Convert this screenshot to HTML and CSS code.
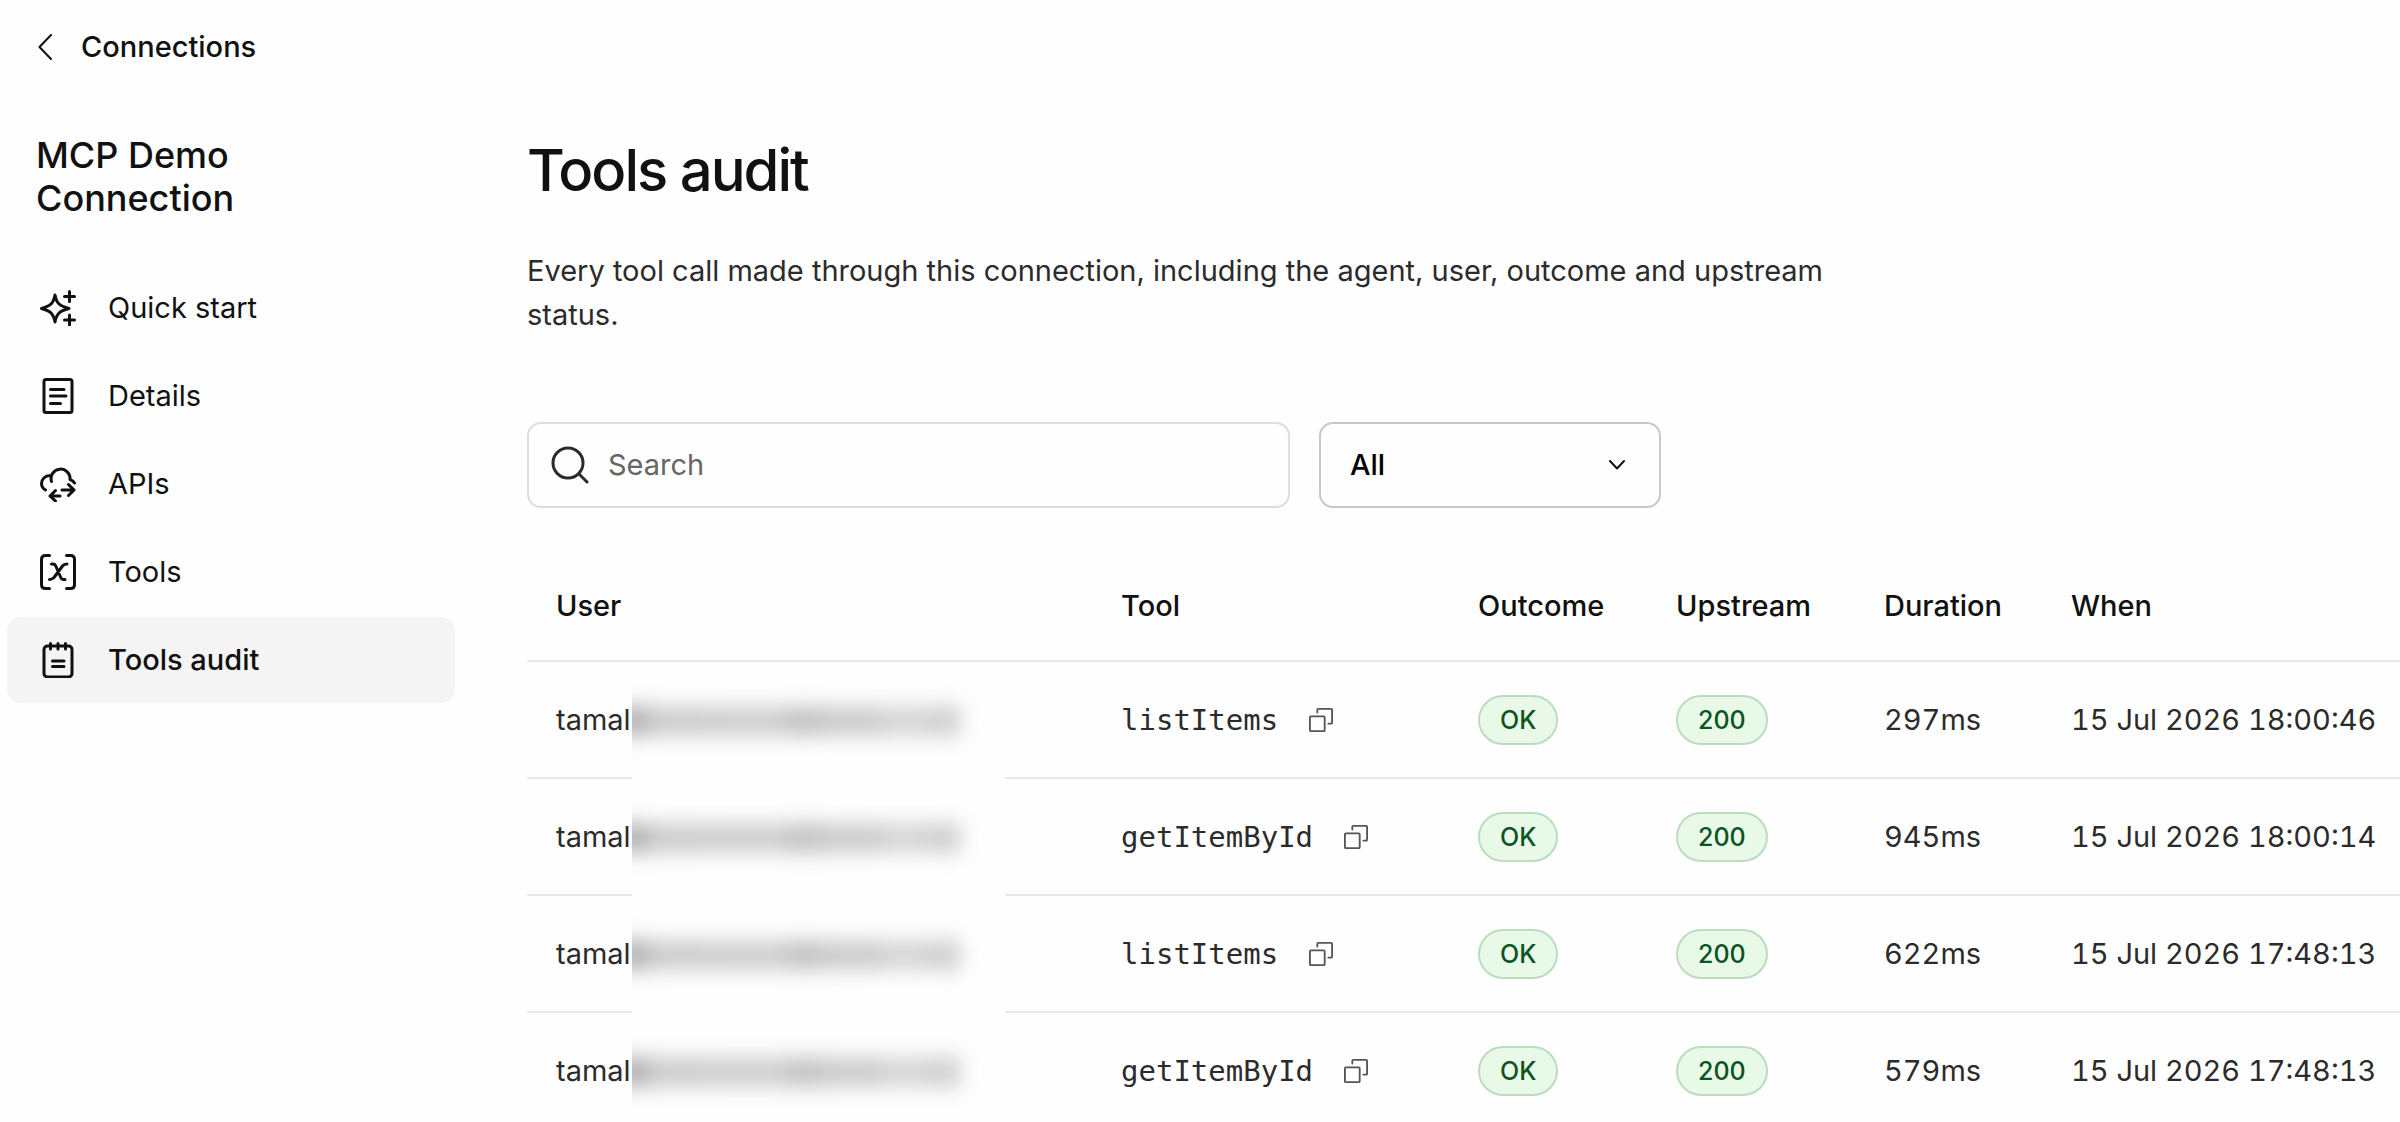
FILE: index.html
```html
<!DOCTYPE html>
<html lang="en">
<head>
    <meta charset="UTF-8">
    <title>Tools audit</title>
    <link rel="stylesheet" href="styles.css">
</head>
<body>
    <header class="topbar">
        <a href="#" class="back-link">
            <svg class="back-icon" viewBox="0 0 14 26"><path d="M13 1 L1.500 13 L13 25"/></svg>
            Connections
        </a>
    </header>

    <div class="layout">
        <nav class="sidebar">
            <h2>MCP Demo Connection</h2>
            <a href="#" class="nav-item">
                <svg class="nav-icon" viewBox="0 0 36 36"><path d="M15 5 C16.500 13 19 16 29 18.500 C19 21 16.500 24 15 32 C13.500 24 11 21 1.500 18.500 C11 16 13.500 13 15 5z"/><path d="M29.500 1.500v10M24.500 6.500h10M29.500 25v10M24.500 30h10"/></svg>
                Quick start
            </a>
            <a href="#" class="nav-item">
                <svg class="nav-icon" viewBox="0 0 36 36"><rect x="4" y="1.500" width="28" height="33" rx="2"/><path d="M10.500 11.500h13.500M10.500 18h15.500M10.500 25.500h10"/></svg>
                Details
            </a>
            <a href="#" class="nav-item">
                <svg class="nav-icon" viewBox="0 0 36 36"><path d="M11.500 15.500a9.500 9.500 0 1 1 18.500 -2q3 1 4.500 3.500M10 9.500c-5 0-8.500 4-8.500 8q0 4 4 6.500"/><path d="M22 24h12M28.500 18.500l5.500 5.500-5.500 5.500M20 30h-10M15.500 24.500l-5.500 5.500 5.500 5"/></svg>
                APIs
            </a>
            <a href="#" class="nav-item">
                <svg class="nav-icon" viewBox="0 0 36 36"><path d="M9.500 1.500h-4q-4 0-4 4v25q0 4 4 4h4M26.500 1.500h4q4 0 4 4v25q0 4-4 4h-4"/><path d="M11.500 10h1.500q2 0 3 2.500l4.500 10.500q1 2.500 3 2.500h1.500M27 10q-3 0-4.500 2l-8.500 11.500q-2 2-4.500 2"/></svg>
                Tools
            </a>
            <a href="#" class="nav-item active">
                <svg class="nav-icon" viewBox="0 0 36 36"><rect x="4" y="4" width="28" height="31" rx="3.500"/><path d="M10.500 1.500v5.500M18 1.500v5.500M25.500 1.500v5.500M12.500 19h11.500M12.500 24.500h11.500"/></svg>
                Tools audit
            </a>
        </nav>

        <main class="content">
            <h1>Tools audit</h1>
            <p class="intro">Every tool call made through this connection, including the agent, user, outcome and upstream status.</p>

            <div class="filters">
                <label class="search">
                    <svg class="search-icon" viewBox="0 0 38 38"><circle cx="17" cy="17" r="15"/><path d="M28 28l8 8"/></svg>
                    <input type="text" placeholder="Search" aria-label="Search">
                </label>
                <div class="select-box">
                    <select aria-label="Outcome">
                        <option>All</option>
                        <option>OK</option>
                        <option>Error</option>
                    </select>
                    <svg class="chevron" viewBox="0 0 16 10"><path d="M1 1l7 7.500 7-7.500"/></svg>
                </div>
            </div>

            <table class="audit">
                <thead>
                    <tr>
                        <th class="col-user">User</th>
                        <th class="col-tool">Tool</th>
                        <th class="col-outcome">Outcome</th>
                        <th class="col-upstream">Upstream</th>
                        <th class="col-duration">Duration</th>
                        <th>When</th>
                    </tr>
                </thead>
                <tbody id="auditRows">
                    <!-- Audit rows are inserted here -->
                </tbody>
            </table>
        </main>
    </div>

    <script>
        const calls = [
            { tool: 'listItems', duration: '297ms', when: '15 Jul 2026 18:00:46' },
            { tool: 'getItemById', duration: '945ms', when: '15 Jul 2026 18:00:14' },
            { tool: 'listItems', duration: '622ms', when: '15 Jul 2026 17:48:13' },
            { tool: 'getItemById', duration: '579ms', when: '15 Jul 2026 17:48:13' }
        ];

        const rows = document.getElementById('auditRows');

        calls.forEach((call) => {
            const row = document.createElement('tr');
            row.innerHTML = `
                <td class="user">tamal<span class="redacted"><span class="smudge"></span></span></td>
                <td><div class="tool"><code>${call.tool}</code>
                    <button class="copy" aria-label="Copy"><svg viewBox="0 0 26 26"><rect x="1" y="9" width="16" height="16" rx="1"/><path d="M9 5V2q0-1 1-1h14q1 0 1 1v14q0 1-1 1h-3"/></svg></button></div></td>
                <td><span class="badge">OK</span></td>
                <td><span class="badge">200</span></td>
                <td class="num">${call.duration}</td>
                <td class="num">${call.when}</td>`;
            rows.appendChild(row);
        });
    </script>
</body>
</html>
```
FILE: styles.css
```css
/* General Styles */
* {
    box-sizing: border-box;
}
body {
    font-family: Inter, "Liberation Sans", sans-serif;
    font-size: 29px;
    line-height: 44px;
    background-color: #fefefe;
    margin: 0;
    color: #111;
    overflow-x: hidden;
}
a {
    color: inherit;
    text-decoration: none;
}
svg {
    fill: none;
    stroke: currentColor;
    stroke-linecap: round;
    stroke-linejoin: round;
}
/* Top bar */
.topbar {
    display: flex;
    align-items: center;
    height: 94px;
    padding-left: 38px;
}
.back-link {
    display: flex;
    align-items: center;
    gap: 29px;
    font-weight: 500;
}
.back-icon {
    width: 14px;
    height: 26px;
    stroke-width: 2;
}
/* Layout */
.layout {
    display: flex;
    align-items: flex-start;
}
.sidebar {
    flex: none;
    width: 455px;
    padding: 40px 0 0 7px;
}
.sidebar h2 {
    width: 240px;
    margin: 0 0 45px 29px;
    font-size: 36px;
    font-weight: 500;
    line-height: 43px;
}
.nav-item {
    display: flex;
    align-items: center;
    gap: 32px;
    height: 86px;
    margin-bottom: 2px;
    padding-left: 33px;
    border-radius: 14px;
}
.nav-item.active {
    background-color: #f4f4f4;
    font-weight: 500;
}
.nav-icon {
    width: 36px;
    height: 36px;
    stroke-width: 3;
}
/* Content */
.content {
    flex: 1;
    min-width: 0;
    padding: 40px 0 0 72px;
}
h1 {
    margin: 0;
    font-size: 58px;
    font-weight: 500;
    line-height: 72px;
    letter-spacing: -2px;
}
.intro {
    max-width: 1300px;
    margin: 43px 0 85px;
    color: #2b2b2b;
}
/* Filters */
.filters {
    display: flex;
    gap: 29px;
}
.search {
    display: flex;
    align-items: center;
    width: 763px;
    height: 86px;
    padding-left: 22px;
    border: 2px solid #ddd;
    border-radius: 14px;
    gap: 19px;
}
.search-icon {
    flex: none;
    width: 38px;
    height: 38px;
    stroke: #2b2b2b;
    stroke-width: 3;
}
.search input {
    flex: 1;
    border: none;
    outline: none;
    padding: 0;
    background: transparent;
    font: inherit;
}
.search input::placeholder {
    color: #666;
    opacity: 1;
}
.select-box {
    position: relative;
    width: 342px;
}
.select-box select {
    appearance: none;
    width: 100%;
    height: 86px;
    padding: 0 29px;
    border: 2px solid #c8c8c8;
    border-radius: 14px;
    background: transparent;
    color: #000;
    font: inherit;
    font-weight: 500;
}
.chevron {
    position: absolute;
    top: 38px;
    right: 36px;
    width: 16px;
    height: 10px;
    stroke-width: 2;
    pointer-events: none;
}
/* Audit table */
.audit {
    width: 100%;
    margin-top: 40px;
    border-collapse: collapse;
    table-layout: fixed;
    white-space: nowrap;
}
.audit th,
.audit td {
    padding: 0 0 0 29px;
    text-align: left;
    border-bottom: 2px solid #e9e9e9;
}
.audit th {
    height: 113px;
    padding-top: 4px;
    font-weight: 500;
}
.audit td {
    height: 117px;
    color: #2b2b2b;
}
.audit tbody tr:last-child td {
    border-bottom: none;
}
.col-user {
    width: 565px;
}
.col-tool {
    width: 357px;
}
.col-outcome {
    width: 198px;
}
.col-upstream {
    width: 208px;
}
.col-duration {
    width: 187px;
}
.num {
    font-variant-numeric: tabular-nums;
}
/* Hidden part of the user address */
.user {
    position: relative;
}
.redacted {
    position: absolute;
    top: 8px;
    left: 105px;
    width: 373px;
    height: 117px;
    overflow: hidden;
    background-color: #fefefe;
}
.audit tbody tr:last-child .redacted {
    height: 88px;
}
.smudge {
    position: absolute;
    top: 36px;
    left: -12px;
    width: 340px;
    height: 30px;
    background: linear-gradient(90deg, #aaa 4%, #ccc 10%, #d0d0d0 45%, #c0c0c0 54%, #ccc 62%, #ccc 74%, #d8d8d8 82%, #ccc);
    filter: blur(10px);
}
/* Tool cell */
.tool {
    display: flex;
    align-items: center;
    gap: 31px;
}
.tool code {
    font-family: "DejaVu Sans Mono", "Liberation Mono", monospace;
    font-size: 29px;
}
.copy {
    width: 24px;
    height: 24px;
    padding: 0;
    border: none;
    background: none;
    color: #555;
    cursor: pointer;
}
.copy svg {
    display: block;
    stroke-width: 2;
}
/* Badges */
.badge {
    display: inline-block;
    height: 50px;
    padding: 0 20px;
    border: 2px solid #bcdcc0;
    border-radius: 25px;
    background-color: #e8f9e8;
    color: #0c5423;
    font-size: 25px;
    font-weight: 500;
    line-height: 46px;
    vertical-align: middle;
}
```
